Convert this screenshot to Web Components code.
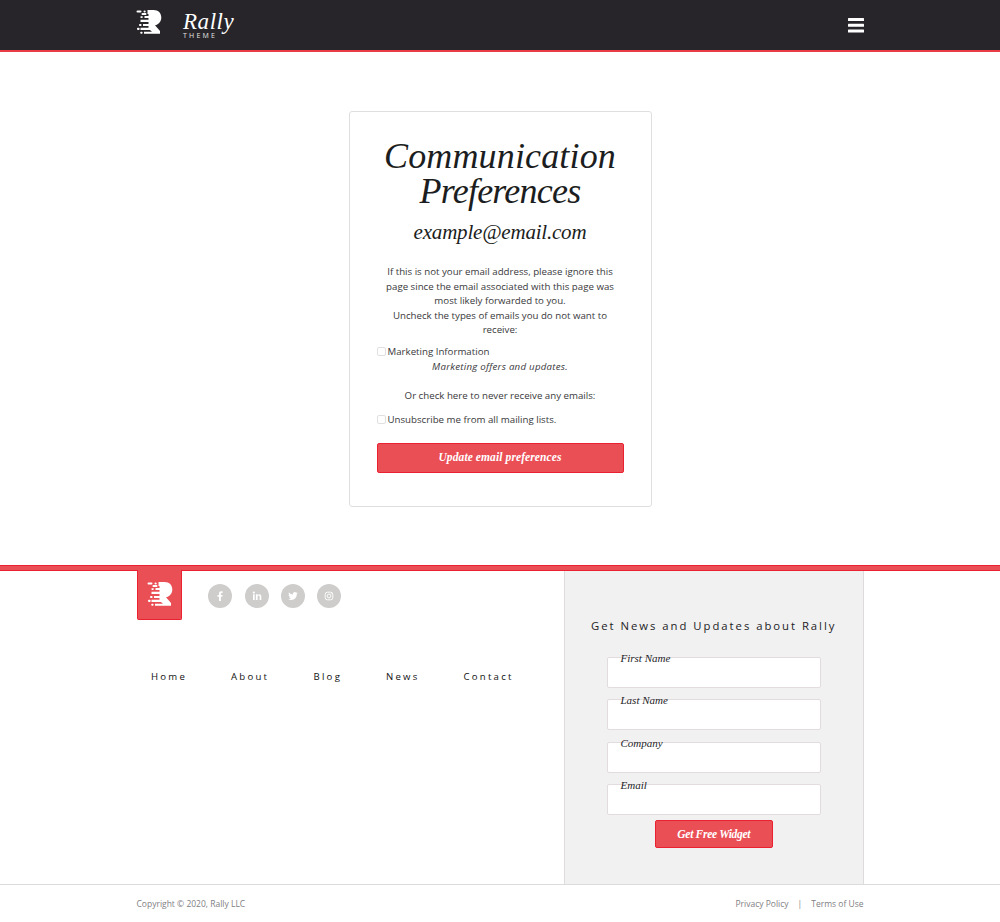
<!DOCTYPE html>
<html lang="en">
<head>
<meta charset="utf-8">
<title>Rally Theme – Communication Preferences</title>
<style>
  html, body { margin: 0; height: 922px; overflow: hidden; background: #fff; color: #232226; font-family: "Open Sans", sans-serif;
    --red: #eb4f56; --red-dark: #ea2130; --line: #dfdfdf; --serif: "Liberation Serif", serif; }
</style>
</head>
<body>
<rally-header></rally-header>
<rally-main>
  <rally-preferences></rally-preferences>
</rally-main>
<rally-footer></rally-footer>

<script>
const define = (name, html) => {
  const template = document.createElement('template');
  template.innerHTML = html;
  customElements.define(name, class extends HTMLElement {
    constructor() {
      super();
      this.attachShadow({ mode: 'open' }).append(template.content.cloneNode(true));
    }
  });
};

define('rally-mark', `
  <style>:host { display: block; width: 26px; height: 24px; } svg { display: block; width: 100%; height: 100%; }</style>
  <svg viewBox="0 0 26 24" fill="#fff">
    <path d="M11.500 0H17.500C22.500 0 25.300 3 25.300 7.500C25.300 11.500 22.800 14.500 19 15.300L24 21V23.700H8V21.700H16L14 20H4.500V17.800H12.500V16H7V13.900H12.500V12H4.500V9.800H12.500V8H8.500V5.900H12.500V4H11.500Z"/>
    <rect x=".5" y=".4" width="5" height="2.100" rx="1"/><rect x="7.500" y=".4" width="2.200" height="2.100" rx="1"/>
    <rect x="5.500" y="3" width="5" height="1.900" rx=".9"/><rect x="4.300" y="6.200" width="2.600" height="1.700" rx=".8"/>
    <rect x="3" y="14" width="2.600" height="1.900" rx=".9"/><rect x="1" y="17.800" width="2.600" height="2.100" rx="1"/><rect x="4.200" y="21.700" width="2.400" height="2" rx="1"/>
  </svg>`);

define('rally-header', `
  <style>
    :host { display: flex; box-sizing: border-box; height: 52px; padding: 0 136px; justify-content: space-between; background: #272529; border-bottom: 2px solid #ea3c46; color: #fff; }
    .brand { display: flex; padding-top: 10px; gap: 21px; }
    .words { display: flex; flex-direction: column; }
    .name { font: italic 23px/24px var(--serif); letter-spacing: .55px; }
    .sub { font-size: 7px; line-height: 8px; letter-spacing: 2.200px; margin-top: -2.500px; color: #e6e6e6; }
    svg { margin-top: 18px; width: 16px; height: 15px; }
  </style>
  <div class="brand"><rally-mark></rally-mark><div class="words"><span class="name">Rally</span><span class="sub">THEME</span></div></div>
  <svg viewBox="0 0 16 15" fill="#fff"><rect width="16" height="3" rx=".5"/><rect y="5.700" width="16" height="3" rx=".5"/><rect y="11.400" width="16" height="3" rx=".5"/></svg>`);

define('rally-main', `
  <style>:host { display: flex; box-sizing: border-box; height: 513px; padding-top: 59px; justify-content: center; align-items: flex-start; }</style>
  <slot></slot>`);

define('rally-check', `
  <style>
    :host { display: flex; align-items: center; gap: 2px; height: 15px; text-align: left; }
    i { box-sizing: border-box; width: 9px; height: 9px; border: 1px solid #e2dfe0; border-radius: 2px; background: #fff; margin-top: -1px; }
  </style><i></i><span><slot></slot></span>`);

define('rally-button', `
  <style>
    :host { display: flex; box-sizing: border-box; align-items: center; justify-content: center; background: var(--red); border: 1px solid var(--red-dark); border-radius: 2px; color: #fff; font: italic bold 11.500px/14px var(--serif); }
  </style><slot></slot>`);

define('rally-preferences', `
  <style>
    :host { display: block; box-sizing: border-box; width: 303px; height: 396px; padding: 27px 27px 0; border: 1px solid #dfdfdf; border-radius: 3px; text-align: center; font-size: 9.700px; line-height: 14.500px; color: #39383b; }
    h1 { margin: 0; font: italic 36px/35px var(--serif); color: #1b1d20; }
    h1 span { display: block; white-space: nowrap; }
    .a { letter-spacing: .15px; } .b { letter-spacing: -.75px; }
    h2 { margin: 11px 0 0; font: italic 21px/25px var(--serif); letter-spacing: -.2px; color: #1b1d20; }
    p { margin: 0; white-space: nowrap; }
    em { letter-spacing: .25px; }
    .intro { margin-top: 20px; margin-bottom: 7px; }
    .or { margin: 15px 0 9px; }
    rally-button { height: 30px; margin-top: 15px; padding-bottom: 1px; letter-spacing: .1px; }
  </style>
  <h1><span class="a">Communication</span><span class="b">Preferences</span></h1>
  <h2>example@email.com</h2>
  <p class="intro">If this is not your email address, please ignore this<br>page since the email associated with this page was<br>most likely forwarded to you.<br>Uncheck the types of emails you do not want to<br>receive:</p>
  <rally-check>Marketing Information</rally-check>
  <p><em>Marketing offers and updates.</em></p>
  <p class="or">Or check here to never receive any emails:</p>
  <rally-check>Unsubscribe me from all mailing lists.</rally-check>
  <rally-button>Update email preferences</rally-button>`);

define('rally-social', `
  <style>
    :host { display: flex; gap: 12.300px; }
    svg { display: block; width: 24px; height: 24px; fill: #fff; }
    circle.bg { fill: #cfcdcc; }
  </style>
  <svg viewBox="0 0 24 24"><circle class="bg" cx="12" cy="12" r="12"/><path d="M11 17V12.700H9.500V11H11V9.600C11 8 12 7.200 13.300 7.200H14.600V8.900H13.800C13.100 8.900 12.900 9.200 12.900 9.800V11H14.600L14.300 12.700H12.900V17Z"/></svg>
  <svg viewBox="0 0 24 24"><circle class="bg" cx="12" cy="12" r="12"/><path d="M8 10.300H9.700V16H8ZM8.850 7.600A1 1 0 1 1 8.840 7.600ZM10.900 10.300H12.600V11.100C13 10.500 13.600 10.200 14.300 10.200C15.900 10.200 16.300 11.200 16.300 12.700V16H14.600V13C14.600 12.200 14.500 11.600 13.700 11.600C12.900 11.600 12.600 12.200 12.600 13V16H10.900Z"/></svg>
  <svg viewBox="0 0 24 24"><circle class="bg" cx="12" cy="12" r="12"/><path transform="translate(7.200 7.200) scale(.4)" d="M24 4.600a10 10 0 0 1-2.800.8 5 5 0 0 0 2.100-2.700 10 10 0 0 1-3.100 1.200A4.900 4.900 0 0 0 11.800 8.400 14 14 0 0 1 1.700 3.200a4.900 4.900 0 0 0 1.500 6.600A5 5 0 0 1 1 9.200a4.900 4.900 0 0 0 3.900 4.900 5 5 0 0 1-2.200.1 4.900 4.900 0 0 0 4.600 3.400A10 10 0 0 1 0 19.600a14 14 0 0 0 21.500-12.500A10 10 0 0 0 24 4.600Z"/></svg>
  <svg viewBox="0 0 24 24"><circle class="bg" cx="12" cy="12" r="12"/><g fill="none" stroke="#fff"><rect x="8.200" y="8.200" width="7.600" height="7.600" rx="2.200" stroke-width=".9"/><circle cx="12" cy="12" r="1.900" stroke-width=".9"/></g><circle cx="14.200" cy="9.800" r=".5"/></svg>`);

define('rally-field', `
  <style>
    :host { display: block; position: relative; box-sizing: border-box; height: 31px; background: #fff; border: 1px solid #e2dcde; border-radius: 2px; }
    label { position: absolute; left: 12.500px; top: -7px; font: italic 11px/14px var(--serif); color: #232226; white-space: nowrap; letter-spacing: inherit; }
  </style><label><slot></slot></label>`);

define('rally-signup', `
  <style>
    :host { display: flex; flex-direction: column; box-sizing: border-box; width: 300px; height: 314px; padding: 47px 42.500px 0 42px; background: #f1f1f1; border: solid #dfdadb; border-width: 0 1px; }
    h3 { margin: 0 -30px 23px; font-size: 11.300px; line-height: 17px; font-weight: 400; letter-spacing: 1.980px; text-align: center; white-space: nowrap; }
    .fields { display: grid; gap: 11.400px; }
    rally-button { align-self: center; width: 118px; height: 28px; margin-top: 5px; letter-spacing: -.3px; }
  </style>
  <h3>Get News and Updates about Rally</h3>
  <div class="fields">
    <rally-field>First Name</rally-field><rally-field>Last Name</rally-field><rally-field>Company</rally-field><rally-field>Email</rally-field>
  </div>
  <rally-button>Get Free Widget</rally-button>`);

define('rally-footer', `
  <style>
    :host { display: block; }
    .rule { height: 4px; background: var(--red); border: solid var(--red-dark); border-width: 1px 0; }
    .body { display: flex; justify-content: space-between; padding: 0 136px; height: 313px; }
    .left { flex: none; width: 400px; }
    .top { display: flex; gap: 26px; align-items: flex-start; height: 99px; }
    .logo { box-sizing: border-box; width: 45px; height: 50px; margin: -1px 0 0 1px; padding: 12px 0 0 9px; background: var(--red); border: 1px solid var(--red-dark); border-top: 0; border-radius: 0 0 2px 2px; }
    rally-social { margin-top: 12.500px; margin-left: .3px; }
    rally-signup { height: 313px; padding-top: 46px; }
    nav { display: flex; margin-left: 15px; white-space: nowrap; font-size: 9.600px; line-height: 14px; color: #111; letter-spacing: 2.250px; font-weight: 500; }
    nav span:nth-child(1) { width: 80px; } nav span:nth-child(2) { width: 82.500px; } nav span:nth-child(3) { width: 72.500px; } nav span:nth-child(4) { width: 77.500px; }
    .legal { display: flex; justify-content: space-between; padding: 12px 136.500px 0; border-top: 1px solid #dcdcdc; font-size: 8.500px; line-height: 14px; color: #818083; }
    .links { display: flex; gap: 9px; }
  </style>
  <div class="rule"></div>
  <div class="body">
    <div class="left">
      <div class="top"><div class="logo"><rally-mark></rally-mark></div><rally-social></rally-social></div>
      <nav><span>Home</span><span>About</span><span>Blog</span><span>News</span><span>Contact</span></nav>
    </div>
    <rally-signup></rally-signup>
  </div>
  <div class="legal"><span>Copyright © 2020, Rally LLC</span><div class="links"><span>Privacy Policy</span><span>|</span><span>Terms of Use</span></div></div>`);
</script>
</body>
</html>
